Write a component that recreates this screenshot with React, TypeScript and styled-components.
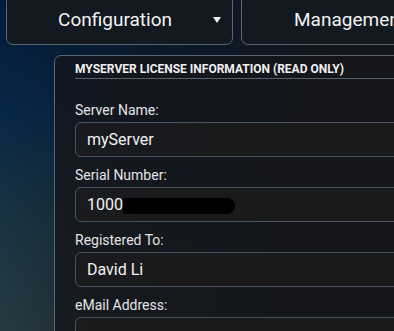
import React from "react";
import styled, { createGlobalStyle } from "styled-components";

const GlobalStyle = createGlobalStyle`
  html, body {
    margin: 0;
    padding: 0;
    height: 100%;
    overflow: hidden;
  }
  body {
    font-family: Roboto, "Liberation Sans", sans-serif;
    background:
      linear-gradient(100deg, rgba(16, 20, 26, 0) 0%, rgba(16, 20, 26, 0.55) 35%, rgba(20, 22, 26, 0.95) 75%),
      linear-gradient(180deg, #021b38 0%, #06294a 35%, #1d3a48 70%, #2c454a 100%);
    color: #e6e6e6;
  }
`;

const Page = styled.div`
  width: 394px;
  height: 331px;
  overflow: hidden;
`;

const Nav = styled.div`
  display: flex;
  gap: 8px;
  padding-left: 6px;
  margin-top: -6px;
`;

const NavButton = styled.div`
  flex: 0 0 227px;
  height: 51px;
  box-sizing: border-box;
  display: flex;
  align-items: center;
  padding-left: 10px;
  background: #121920;
  border: 1px solid #5b6570;
  border-radius: 7px;
  color: #f2f2f2;
  font-size: 19px;
`;

const NavLabel = styled.span`
  flex: 1;
  text-align: center;
`;

const Caret = styled.span`
  width: 0;
  height: 0;
  margin-right: 11px;
  border-left: 4px solid transparent;
  border-right: 4px solid transparent;
  border-top: 6px solid #f2f2f2;
`;

const Panel = styled.div`
  margin: 10px 0 0 54px;
  width: 420px;
  box-sizing: border-box;
  padding: 5px 0 0 20px;
  background: rgba(20, 22, 27, 0.78);
  border: 1px solid #5b6570;
  border-radius: 7px 7px 0 0;
  height: 320px;
`;

const PanelTitle = styled.div`
  font-size: 12px;
  line-height: 16px;
  font-weight: 700;
  color: #f0f0f0;
  padding-bottom: 1px;
  border-bottom: 1px solid #58626c;
  margin-bottom: 22px;
`;

const Field = styled.div`
  margin-bottom: 9px;
`;

const Label = styled.div`
  font-size: 14px;
  line-height: 18px;
  color: #e4e4e4;
  margin-bottom: 3px;
`;

const Input = styled.div`
  height: 35px;
  box-sizing: border-box;
  display: flex;
  align-items: center;
  padding-left: 11px;
  border: 1px solid #48525c;
  border-radius: 6px;
  background: rgba(38, 32, 28, 0.35);
  font-size: 16px;
  color: #f2f2f2;
`;

const Redacted = styled.span`
  display: inline-block;
  width: 112px;
  height: 16px;
  margin-top: 2px;
  background: #000;
  border-radius: 3px 8px 8px 2px;
`;

const fields = [
  { label: "Server Name:", value: "myServer" },
  { label: "Serial Number:", value: "1000", redacted: true },
  { label: "Registered To:", value: "David Li" },
  { label: "eMail Address:", value: "" },
];

const App: React.FunctionComponent = () => {
  return (
    <Page>
      <GlobalStyle />
      <Nav>
        <NavButton>
          <NavLabel>Configuration</NavLabel>
          <Caret />
        </NavButton>
        <NavButton>
          <NavLabel>Management</NavLabel>
          <Caret />
        </NavButton>
      </Nav>
      <Panel>
        <PanelTitle>MYSERVER LICENSE INFORMATION (READ ONLY)</PanelTitle>
        {fields.map((f, index) => (
          <Field key={index}>
            <Label>{f.label}</Label>
            <Input>
              {f.value}
              {f.redacted && <Redacted />}
            </Input>
          </Field>
        ))}
      </Panel>
    </Page>
  );
};

export default App;
